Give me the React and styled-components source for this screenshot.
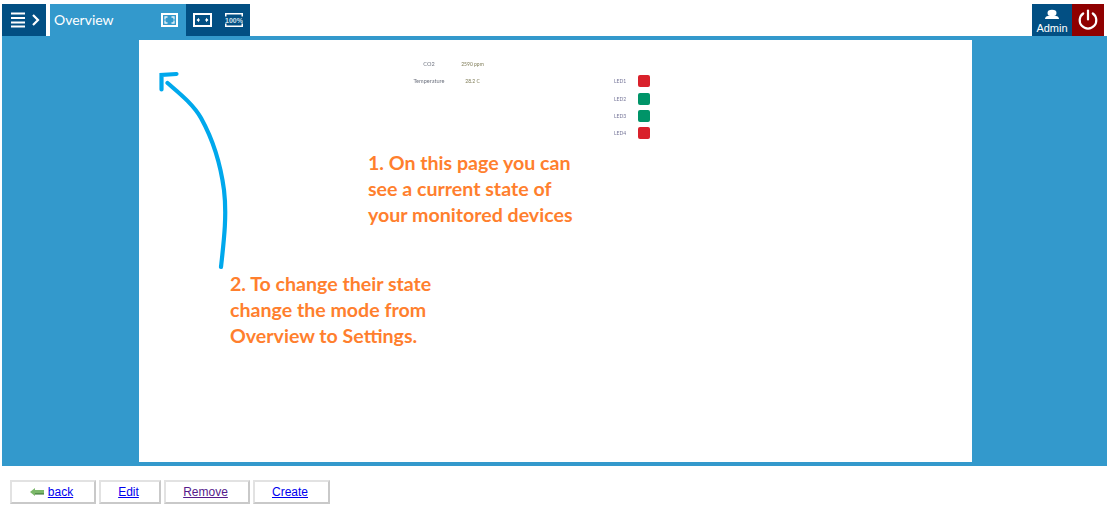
import React from 'react';
import styled, { createGlobalStyle } from 'styled-components';

const DARK = '#024f83';
const LIGHT = '#3399cc';

const GlobalStyle = createGlobalStyle`
  html, body {
    margin: 0;
    padding: 0;
    background: #fff;
  }
`;

const Page = styled.div`
  width: 1107px;
  height: 514px;
  padding: 4px 0 0 2px;
  box-sizing: border-box;
  overflow: hidden;
  font-family: 'Liberation Sans', Arial, sans-serif;
`;

const TopBar = styled.header`
  display: flex;
  height: 32px;
  padding-right: 3px;
`;

const MenuButton = styled.div`
  display: flex;
  align-items: center;
  justify-content: center;
  width: 44px;
  margin-right: 4px;
  padding-left: 2px;
  box-sizing: border-box;
  background: ${DARK};
`;

const ModeBox = styled.div`
  display: flex;
  align-items: center;
  justify-content: space-between;
  width: 136px;
  padding: 0 8px 0 4px;
  box-sizing: border-box;
  background: ${LIGHT};
  color: #fff;
  font: 400 14px Lato, sans-serif;

  span {
    margin-bottom: 2px;
  }
`;

const ViewTools = styled.div`
  display: flex;
  align-items: center;
  gap: 13px;
  width: 64px;
  padding-left: 7px;
  box-sizing: border-box;
  background: ${DARK};
`;

const Spacer = styled.div`
  flex: 1;
`;

const UserButton = styled.div`
  display: flex;
  flex-direction: column;
  align-items: center;
  gap: 2px;
  width: 40px;
  padding-top: 5px;
  box-sizing: border-box;
  background: ${DARK};
  color: #fff;
  font-size: 11px;
  line-height: 14px;
`;

const PowerButton = styled.div`
  display: flex;
  align-items: center;
  justify-content: center;
  width: 32px;
  background: #8f0000;
`;

const Stage = styled.main`
  height: 430px;
  padding: 4px 135px 4px 137px;
  box-sizing: border-box;
  background: ${LIGHT};
`;

const Canvas = styled.section`
  position: relative;
  height: 422px;
  background: #fff;
`;

const ArrowArt = styled.svg`
  position: absolute;
  left: 0;
  top: 0;
`;

const SensorGrid = styled.div`
  position: absolute;
  left: 265px;
  top: 15px;
  display: grid;
  grid-template-columns: 50px 37px;
  grid-auto-rows: 17px;
  align-items: center;
  justify-items: center;
  font: 400 5.6px/8px Lato, sans-serif;
  color: #6f7480;
  filter: blur(0.25px);
`;

const SensorValue = styled.span`
  font-size: 5px;
  color: #7d7a55;
`;

const LedList = styled.div`
  position: absolute;
  left: 475px;
  top: 35px;
  display: flex;
  flex-direction: column;
  gap: 5px;
`;

const LedRow = styled.div`
  display: flex;
  align-items: center;
  justify-content: space-between;
  width: 36px;
  font: 400 5px/8px Lato, sans-serif;
  color: #77779a;

  &:first-child {
    margin-bottom: 1px;
  }

  span {
    filter: blur(0.25px);
  }
`;

const Led = styled.div`
  width: 12px;
  height: 12px;
  border-radius: 2px;
  background: ${({ $on }) => ($on ? '#009468' : '#d9212b')};
`;

const Note = styled.p`
  position: absolute;
  left: ${({ $left }) => $left}px;
  top: ${({ $top }) => $top}px;
  margin: 0;
  white-space: nowrap;
  font: 700 19.6px/26px Lato, sans-serif;
  color: #ff7f2e;
`;

const Footer = styled.footer`
  display: flex;
  gap: 3px;
  margin: 14px 0 0 8px;
`;

const FootButton = styled.div`
  display: flex;
  align-items: center;
  justify-content: center;
  gap: 4px;
  width: ${({ $width }) => $width}px;
  height: 24px;
  padding-right: 3px;
  box-sizing: border-box;
  border: 2px solid;
  border-color: #e2e2e2 #c9c9c9 #c9c9c9 #e2e2e2;
  font-size: 12px;

  a {
    color: ${({ $visited }) => ($visited ? '#551a8b' : '#0000ee')};
  }
`;

function MenuIcon() {
  return (
    <svg width="30" height="16" viewBox="0 0 30 16">
      <path d="M1 1.5h14M1 6h14M1 10.500h14M1 14.500h14" stroke="#fff" strokeWidth="1.800" fill="none" />
      <path d="M23 3l5 5-5 5" stroke="#fff" strokeWidth="2.200" fill="none" />
    </svg>
  );
}

function FitIcon() {
  return (
    <svg width="17" height="14" viewBox="0 0 17 14">
      <rect x="1" y="1" width="15" height="12" stroke="#fff" strokeWidth="2" fill="none" />
      <path d="M4 6.500V4h2.500M13 6.500V4h-2.500M4 7.500V10h2.500M13 7.500V10h-2.500" stroke="#e4f1f8" strokeWidth="1.300" fill="none" />
    </svg>
  );
}

function WidthIcon() {
  return (
    <svg width="19" height="14" viewBox="0 0 19 14">
      <rect x="1" y="1" width="17" height="12" stroke="#fff" strokeWidth="2" fill="none" />
      <path d="M3.500 7l2.500-2.200v4.400zM15.500 7L13 4.800v4.400z" fill="#fff" />
      <path d="M5 7h2M12 7h2" stroke="#fff" strokeWidth="1.200" />
    </svg>
  );
}

function ZoomIcon() {
  return (
    <svg width="18" height="14" viewBox="0 0 18 14">
      <path d="M.75 3.500V.75h16.500v2.750M.75 10.500v2.750h16.500V10.500" stroke="#fff" strokeWidth="1.500" fill="none" />
      <text x="9" y="9.600" textAnchor="middle" fontFamily="Liberation Sans, sans-serif" fontSize="7" fontWeight="700" fill="#cfe0ec">100%</text>
    </svg>
  );
}

function UserIcon() {
  return (
    <svg width="16" height="10" viewBox="0 0 16 10">
      <ellipse cx="8" cy="4" rx="4.500" ry="3.200" fill="#fff" />
      <path d="M1 10c0-2.500 2.500-3.500 7-3.500s7 1 7 3.500z" fill="#fff" />
    </svg>
  );
}

function PowerIcon() {
  return (
    <svg width="22" height="24" viewBox="0 0 22 24">
      <path d="M6.200 5.500A8.300 8.300 0 1 0 15.800 5.500" stroke="#fff" strokeWidth="2.200" fill="none" strokeLinecap="round" />
      <path d="M11 2.500v9" stroke="#fff" strokeWidth="2.200" fill="none" strokeLinecap="round" />
    </svg>
  );
}

function BackArrow() {
  return (
    <svg width="14" height="8" viewBox="0 0 14 8">
      <path d="M0 4l5-4v2h9v4H5v2z" fill="#7cb86a" />
      <path d="M5 6h9" stroke="#2f6b2a" strokeWidth="1" />
    </svg>
  );
}

const leds = [
  { name: 'LED1', on: false },
  { name: 'LED2', on: true },
  { name: 'LED3', on: true },
  { name: 'LED4', on: false },
];

export default function App() {
  return (
    <Page>
      <GlobalStyle />
      <TopBar>
        <MenuButton><MenuIcon /></MenuButton>
        <ModeBox>
          <span>Overview</span>
          <FitIcon />
        </ModeBox>
        <ViewTools>
          <WidthIcon />
          <ZoomIcon />
        </ViewTools>
        <Spacer />
        <UserButton>
          <UserIcon />
          <span>Admin</span>
        </UserButton>
        <PowerButton><PowerIcon /></PowerButton>
      </TopBar>

      <Stage>
        <Canvas>
          <ArrowArt width="120" height="240" viewBox="0 0 120 240">
            <path
              d="M82 227C85 200 88 175 85 150C81 120 72 96 62 78C54 64 40 53 28.500 43"
              stroke="#00a8ec"
              strokeWidth="4.200"
              fill="none"
              strokeLinecap="round"
            />
            <path
              d="M22.500 49.500L22.500 35L37.500 34"
              stroke="#00a8ec"
              strokeWidth="4.200"
              fill="none"
              strokeLinecap="round"
            />
          </ArrowArt>

          <SensorGrid>
            <span>CO2</span>
            <SensorValue>2590 ppm</SensorValue>
            <span>Temperature</span>
            <SensorValue>28.2 C</SensorValue>
          </SensorGrid>

          <LedList>
            {leds.map((led) => (
              <LedRow key={led.name}>
                <span>{led.name}</span>
                <Led $on={led.on} />
              </LedRow>
            ))}
          </LedList>

          <Note $left={229} $top={110}>
            1. On this page you can<br />
            see a current state of<br />
            your monitored devices
          </Note>
          <Note $left={91} $top={231}>
            2. To change their state<br />
            change the mode from<br />
            Overview to Settings.
          </Note>
        </Canvas>
      </Stage>

      <Footer>
        <FootButton $width={86}>
          <BackArrow />
          <a href="#back">back</a>
        </FootButton>
        <FootButton $width={62}><a href="#edit">Edit</a></FootButton>
        <FootButton $width={86} $visited><a href="#remove">Remove</a></FootButton>
        <FootButton $width={77}><a href="#create">Create</a></FootButton>
      </Footer>
    </Page>
  );
}
